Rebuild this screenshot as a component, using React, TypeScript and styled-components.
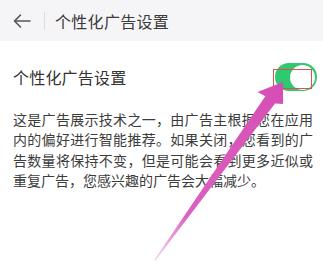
import React from "react";
import styled, { createGlobalStyle } from "styled-components";

const Global = createGlobalStyle`
  html, body { margin: 0; padding: 0; background: #ffffff; }
  body { font-family: "Noto Sans CJK SC", "Noto Sans", sans-serif; }
`;

const Page = styled.div`
  position: relative;
  width: 323px;
  height: 263px;
  overflow: hidden;
  background: #ffffff;
`;

const Header = styled.div`
  height: 41px;
  background: #f5f5f7;
  display: flex;
  align-items: center;
  padding-left: 12px;
`;

const BackButton = styled.div`
  width: 20px;
  height: 20px;
  display: flex;
  align-items: center;
  justify-content: center;
`;

const Divider = styled.div`
  width: 1px;
  height: 18px;
  background: #dcdce0;
  margin: 0 10px 0 12px;
`;

const Title = styled.div`
  font-size: 16px;
  color: #3a3a3a;
  letter-spacing: 0.3px;
`;

const Row = styled.div`
  display: flex;
  align-items: center;
  justify-content: space-between;
  padding: 21px 6px 0 13px;
  height: 30px;
`;

const RowLabel = styled.div`
  font-size: 16px;
  color: #333333;
  letter-spacing: 0.2px;
`;

const Toggle = styled.div`
  position: relative;
  width: 42px;
  height: 28px;
  border-radius: 14px;
  background: #2fc970;
`;

const Thumb = styled.div`
  position: absolute;
  right: 2px;
  top: 1.5px;
  width: 25px;
  height: 25px;
  border-radius: 50%;
  background: #ffffff;
`;

const Highlight = styled.div`
  position: absolute;
  left: -2px;
  top: 6px;
  width: 39px;
  height: 20px;
  border: 1.5px solid #e0504c;
  box-sizing: border-box;
`;

const Description = styled.p`
  margin: 17px 0 0 13px;
  width: 300px;
  font-size: 14px;
  line-height: 20.4px;
  color: #3c3c3c;
  text-align: justify;
`;

const Overlay = styled.svg`
  position: absolute;
  left: 0;
  top: 0;
  pointer-events: none;
`;

export default function App() {
  return (
    <>
      <Global />
      <Page>
        <Header>
          <BackButton>
            <svg width="20" height="16" viewBox="0 0 20 16" fill="none">
              <path d="M18 8H2.5M8.5 2L2.5 8l6 6" stroke="#555" strokeWidth="1.6" strokeLinecap="round" strokeLinejoin="round" />
            </svg>
          </BackButton>
          <Divider />
          <Title>个性化广告设置</Title>
        </Header>
        <Row>
          <RowLabel>个性化广告设置</RowLabel>
          <Toggle>
            <Thumb />
            <Highlight />
          </Toggle>
        </Row>
        <Description>
          这是广告展示技术之一，由广告主根据您在应用内的偏好进行智能推荐。如果关闭，您看到的广告数量将保持不变，但是可能会看到更多近似或重复广告，您感兴趣的广告会大幅减少。
        </Description>
        <Overlay width="323" height="263" viewBox="0 0 323 263">
          <defs>
            <linearGradient id="ag" x1="155" y1="262" x2="283" y2="82" gradientUnits="userSpaceOnUse">
              <stop offset="0" stopColor="#eaa0da" stopOpacity="0.5" />
              <stop offset="0.25" stopColor="#dc62bf" />
              <stop offset="1" stopColor="#d64db5" />
            </linearGradient>
          </defs>
          <polygon
            points="283,82 283,104 275,103.5 155.4,260.4 154.6,259.6 265.3,96.3 257.5,92"
            fill="url(#ag)"
          />
        </Overlay>
      </Page>
    </>
  );
}
